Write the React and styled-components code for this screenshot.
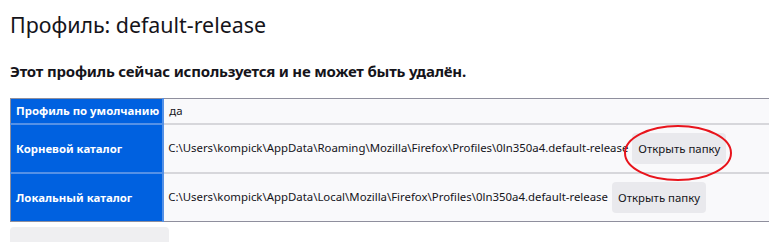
import React from 'react'
import styled, { createGlobalStyle } from 'styled-components'

const GlobalStyle = createGlobalStyle`
  html, body {
    margin: 0;
    padding: 0;
    overflow: hidden;
    background: #fff;
  }
  body {
    font-family: "Noto Sans", "Open Sans", sans-serif;
    color: #15141a;
  }
`

const Page = styled.div`
  padding: 0 10px;
  width: 800px;
`

const Title = styled.h1`
  margin: 0;
  padding-top: 10px;
  font-size: 21.4px;
  font-weight: 400;
  line-height: 30px;
`

const Notice = styled.h2`
  margin: 19px 0 0;
  font-size: 15px;
  font-weight: 700;
  letter-spacing: -0.2px;
  line-height: 24px;
`

const Table = styled.table`
  margin-top: 15px;
  border-collapse: collapse;
  border: 1px solid #8f8f9d;
  width: 790px;
  font-size: 11.4px;
`

const HeadCell = styled.th`
  width: 1%;
  background: #0061e0;
  color: #fff;
  font-weight: 700;
  text-align: left;
  white-space: nowrap;
  padding: 4px 3px 4px 5px;
  line-height: 16px;
  border-bottom: 2px solid #5591e6;
  border-right: 2px solid #5591e6;
  tr:last-child & {
    border-bottom: none;
  }
`

const DataCell = styled.td`
  background: #f9f9fb;
  padding: ${p => (p.$withButton ? '4px 4px' : '4px 5px')};
  border-bottom: 2px solid #d7d7db;
  white-space: nowrap;
  line-height: 16px;
  tr:last-child & {
    border-bottom: none;
  }
`

const ButtonWrap = styled.span`
  position: relative;
  display: inline-block;
  margin: 4px;
  vertical-align: middle;
`

const Button = styled.button`
  font: inherit;
  color: #15141a;
  background: #e9e9ed;
  border: none;
  border-radius: 4px;
  min-height: 31px;
  padding: 0 6px;
  display: block;
`

const WideButton = styled(Button)`
  width: 159px;
  margin: 5px 0 0;
  background: #efeff1;
  font-size: 13px;
  text-align: left;
  padding: 10px 0 0 25px;
`

const Mark = styled.svg`
  position: absolute;
  left: -9px;
  top: -10px;
  pointer-events: none;
`

const rows = [
  { label: 'Профиль по умолчанию', value: 'да' },
  {
    label: 'Корневой каталог',
    value: 'C:\\Users\\kompick\\AppData\\Roaming\\Mozilla\\Firefox\\Profiles\\0ln350a4.default-release',
    button: true,
    marked: true,
  },
  {
    label: 'Локальный каталог',
    value: 'C:\\Users\\kompick\\AppData\\Local\\Mozilla\\Firefox\\Profiles\\0ln350a4.default-release',
    button: true,
  },
]

const App = () => (
  <Page>
    <GlobalStyle />
    <Title>Профиль: default-release</Title>
    <Notice>Этот профиль сейчас используется и не может быть удалён.</Notice>
    <Table>
      <tbody>
        {rows.map(row => (
          <tr key={row.label}>
            <HeadCell>{row.label}</HeadCell>
            <DataCell $withButton={row.button}>
              {row.value}
              {row.button && (
                <ButtonWrap>
                  <Button>Открыть папку</Button>
                  {row.marked && (
                    <Mark width="110" height="60" viewBox="0 0 110 60">
                      <ellipse cx="55" cy="30" rx="53" ry="27" fill="none" stroke="#e8141c" strokeWidth="2" />
                    </Mark>
                  )}
                </ButtonWrap>
              )}
            </DataCell>
          </tr>
        ))}
      </tbody>
    </Table>
    <WideButton>Переименовать</WideButton>
  </Page>
)

export default App
